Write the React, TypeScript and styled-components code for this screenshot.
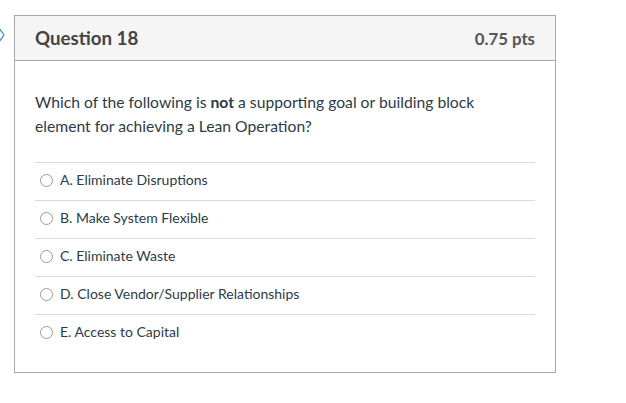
import styled, { createGlobalStyle } from "styled-components";

const GlobalStyle = createGlobalStyle`
    html, body {
        margin: 0;
        padding: 0;
        background: #ffffff;
    }
    body {
        font-family: "Lato", "Noto Sans", sans-serif;
        color: #2d3b45;
    }
`;

const Page = styled.div`
    position: relative;
    width: 626px;
    height: 403px;
    padding: 15px 0 0 14px;
    box-sizing: border-box;
    overflow: hidden;
`;

// bookmark flag, mostly clipped by the left edge
const Bookmark = styled.svg`
    position: absolute;
    left: -12px;
    top: 26px;
`;

const Card = styled.div`
    width: 542px;
    box-sizing: border-box;
    border: 1px solid #a9a9a9;
    background: #ffffff;
`;

const Header = styled.div`
    display: flex;
    align-items: center;
    justify-content: space-between;
    height: 44px;
    padding: 0 20px;
    background: #f5f5f5;
    border-bottom: 1px solid #a9a9a9;
`;

const Title = styled.h2`
    margin: 0;
    font-size: 18.7px;
    font-weight: 700;
    color: #444444;
`;

const Points = styled.span`
    font-size: 16.8px;
    font-weight: 700;
    color: #555555;
`;

const Body = styled.div`
    padding: 29px 20px 20px;
`;

const QuestionText = styled.p`
    margin: 0 0 24px;
    max-width: 450px;
    font-size: 15.7px;
    line-height: 24px;
    color: #2d3b45;
`;

const Answers = styled.div`
    display: flex;
    flex-direction: column;
`;

const Answer = styled.label`
    display: flex;
    align-items: center;
    gap: 7px;
    height: 38px;
    box-sizing: border-box;
    padding-left: 5px;
    padding-bottom: 4px;
    border-top: 1px solid #d9d9d9;
    font-size: 14px;
    color: #2d3b45;
`;

const Radio = styled.span`
    width: 11px;
    height: 11px;
    margin-top: 2px;
    border-radius: 50%;
    border: 1px solid #9a9a9a;
    background: #ffffff;
    flex-shrink: 0;
`;

const answers = [
    "A. Eliminate Disruptions",
    "B. Make System Flexible",
    "C. Eliminate Waste",
    "D. Close Vendor/Supplier Relationships",
    "E. Access to Capital",
];

export default function App() {
    return (
        <>
            <GlobalStyle />
            <Page>
                <Bookmark width="18" height="18" viewBox="0 0 18 18">
                    <path
                        d="M1 2 H11 L16 9 L11 16 H1 Z"
                        fill="none"
                        stroke="#3b8bc4"
                        strokeWidth="1.2"
                    />
                </Bookmark>
                <Card>
                    <Header>
                        <Title>Question 18</Title>
                        <Points>0.75 pts</Points>
                    </Header>
                    <Body>
                        <QuestionText>
                            Which of the following is <strong>not</strong> a
                            supporting goal or building block element for
                            achieving a Lean Operation?
                        </QuestionText>
                        <Answers>
                            {answers.map((a) => (
                                <Answer key={a}>
                                    <Radio />
                                    {a}
                                </Answer>
                            ))}
                        </Answers>
                    </Body>
                </Card>
            </Page>
        </>
    );
}
